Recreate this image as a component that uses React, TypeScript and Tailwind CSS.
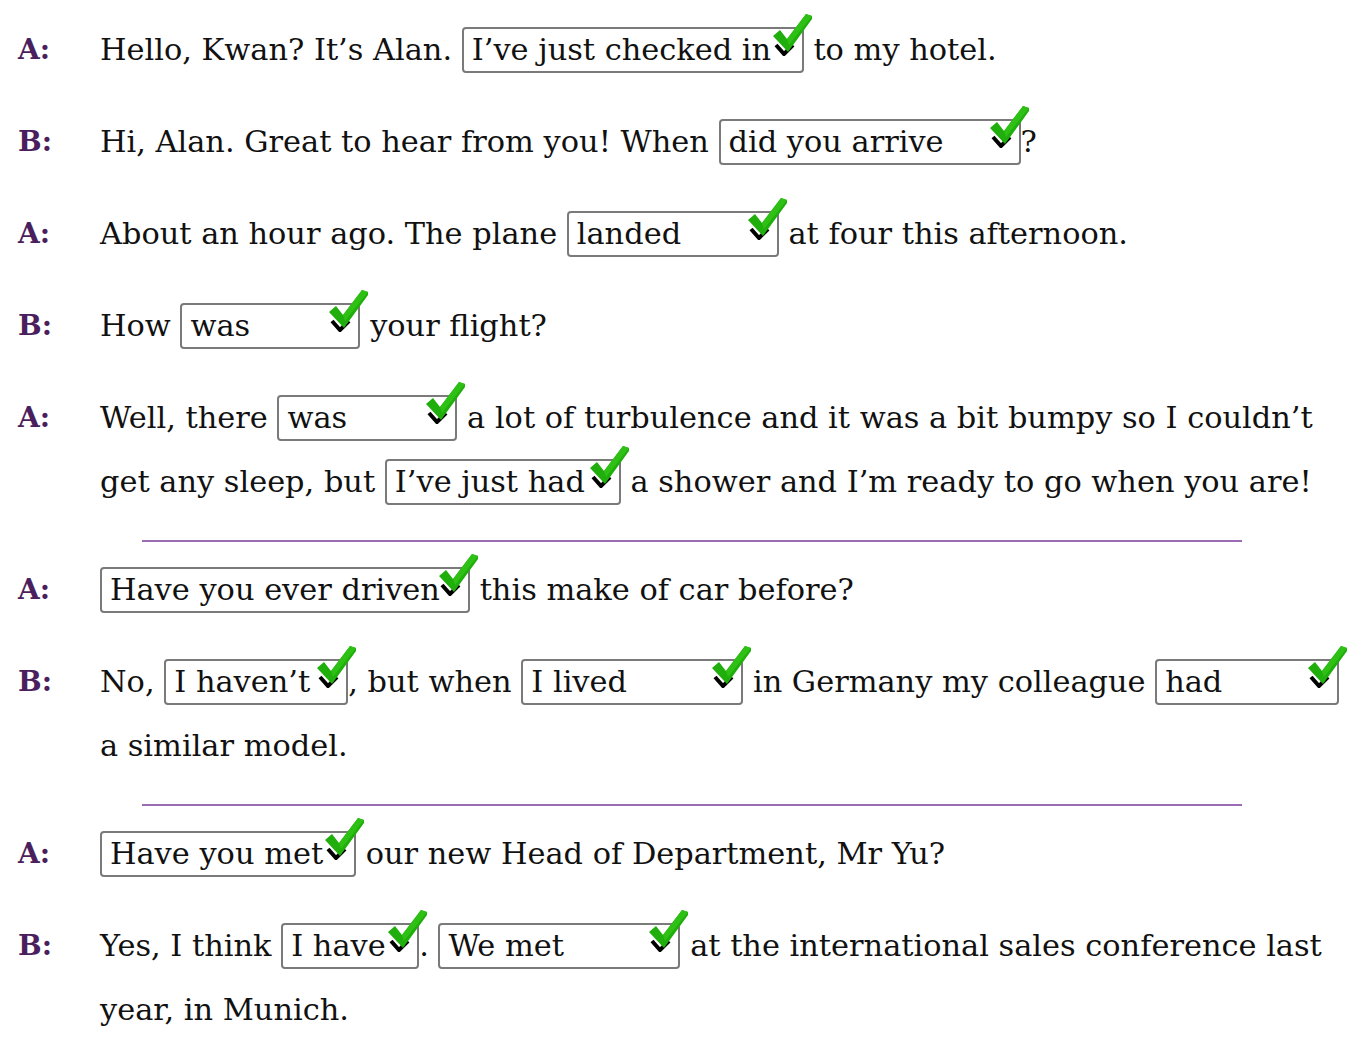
import React from 'react';

const font = { fontFamily: '"DejaVu Serif", "Liberation Serif", serif' };

type GapProps = {
  answer: string;
  width: number;
};

const Check = () => (
  <svg
    className="absolute right-[-11px] top-[-17px]"
    width="42"
    height="44"
    viewBox="0 0 42 44"
  >
    <polyline points="5,33 13,42 22,33" fill="none" stroke="#000" strokeWidth="4" strokeLinejoin="miter" />
    <polygon points="2,24 9,18 16,27 35,2 41,4 41,7 17,40" fill="#1fae0c" />
    <polygon points="16,27 35,2 41,4 18,33" fill="#2fc015" />
  </svg>
);

const Gap: React.FC<GapProps> = ({ answer, width }) => (
  <span
    className="relative inline-block h-[46px] rounded-[4px] border-2 border-[#7a7a7a] pl-[8px] text-left align-baseline leading-[42px]"
    style={{ width }}
  >
    {answer}
    <Check />
  </span>
);

const Row = ({ who, children }: { who: string; children: React.ReactNode }) => (
  <div className="flex py-[14px]">
    <div className="w-[100px] shrink-0 pl-[18px] text-[#4b1f5e] font-bold text-[28px] leading-[64px]">
      {who}
    </div>
    <div className="whitespace-nowrap text-[30.4px] leading-[64px] text-[#111]">{children}</div>
  </div>
);

const Rule = () => <div className="ml-[142px] mt-[12px] mb-[2px] h-[2px] w-[1100px] bg-[#9a6cb4]" />;

export default function App() {
  return (
    <div className="min-h-[1046px] w-[1368px] bg-white pt-[4px]" style={font}>
      <Row who="A:">
        Hello, Kwan? It’s Alan. <Gap answer="I’ve just checked in" width={342} /> to my hotel.
      </Row>
      <Row who="B:">
        Hi, Alan. Great to hear from you! When <Gap answer="did you arrive" width={302} />?
      </Row>
      <Row who="A:">
        About an hour ago. The plane <Gap answer="landed" width={212} /> at four this afternoon.
      </Row>
      <Row who="B:">
        How <Gap answer="was" width={180} /> your flight?
      </Row>
      <Row who="A:">
        Well, there <Gap answer="was" width={180} /> a lot of turbulence and it was a bit bumpy so I couldn’t
        <br />
        get any sleep, but <Gap answer="I’ve just had" width={236} /> a shower and I’m ready to go when you are!
      </Row>
      <Rule />
      <Row who="A:">
        <Gap answer="Have you ever driven" width={370} /> this make of car before?
      </Row>
      <Row who="B:">
        No, <Gap answer="I haven’t" width={184} />, but when <Gap answer="I lived" width={222} /> in Germany my
        colleague <Gap answer="had" width={184} />
        <br />a similar model.
      </Row>
      <Rule />
      <Row who="A:">
        <Gap answer="Have you met" width={256} /> our new Head of Department, Mr Yu?
      </Row>
      <Row who="B:">
        Yes, I think <Gap answer="I have" width={138} />. <Gap answer="We met" width={242} /> at the international
        sales conference last
        <br />
        year, in Munich.
      </Row>
    </div>
  );
}
